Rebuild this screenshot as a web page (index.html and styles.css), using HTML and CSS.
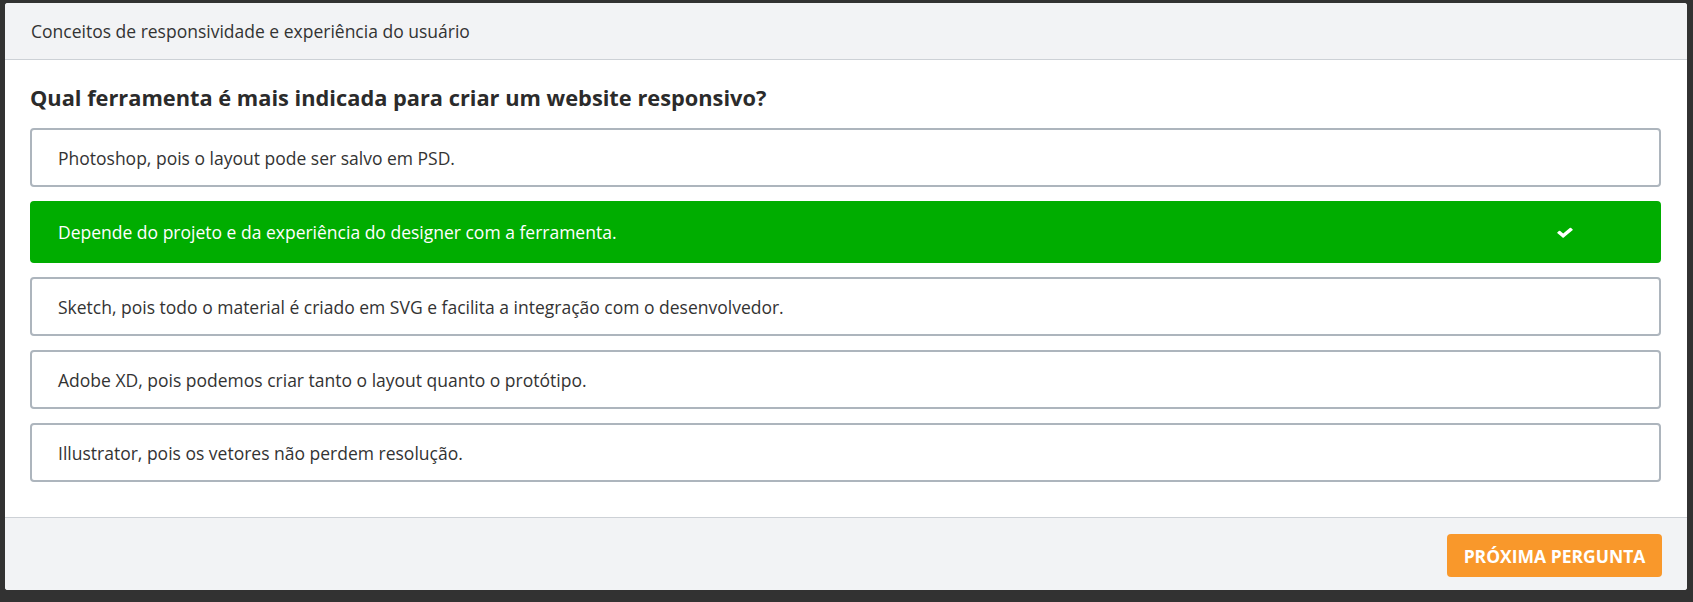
FILE: index.html
```html
<!DOCTYPE html>
<html lang="pt-BR">
<head>
<meta charset="utf-8">
<title>Quiz</title>
<link rel="stylesheet" href="styles.css">
</head>
<body>
<div class="card">
  <div class="card-header">Conceitos de responsividade e experiência do usuário</div>
  <div class="card-body">
    <h2 class="question">Qual ferramenta é mais indicada para criar um website responsivo?</h2>
    <ul class="options">
      <li class="option">Photoshop, pois o layout pode ser salvo em PSD.</li>
      <li class="option correct">
        <span>Depende do projeto e da experiência do designer com a ferramenta.</span>
        <svg class="check" viewBox="0 0 1792 1792" width="18" height="15" preserveAspectRatio="none"><path fill="#fff" d="M1671 566q0 40-28 68l-724 724-136 136q-28 28-68 28t-68-28l-136-136-362-362q-28-28-28-68t28-68l136-136q28-28 68-28t68 28l294 295 656-657q28-28 68-28t68 28l136 136q28 28 28 68z"/></svg>
      </li>
      <li class="option">Sketch, pois todo o material é criado em SVG e facilita a integração com o desenvolvedor.</li>
      <li class="option">Adobe XD, pois podemos criar tanto o layout quanto o protótipo.</li>
      <li class="option">Illustrator, pois os vetores não perdem resolução.</li>
    </ul>
  </div>
  <div class="card-footer">
    <button class="btn-next">PRÓXIMA PERGUNTA</button>
  </div>
</div>
</body>
</html>
```
FILE: styles.css
```css
html, body {
  margin: 0;
  padding: 0;
}
body {
  background: #323232;
  padding: 3px 6px 12px 5px;
  font-family: "Open Sans", "Noto Sans", sans-serif;
  color: #333;
}
.card {
  background: #fff;
  border-radius: 3px;
  overflow: hidden;
  height: 587px;
  display: flex;
  flex-direction: column;
}
.card-header {
  height: 56px;
  background: #f2f3f5;
  border-bottom: 1px solid #cdd1d6;
  padding-left: 26px;
  font-size: 17.5px;
  line-height: 56px;
  color: #333;
}
.card-body {
  flex: 1;
  padding: 23px 26px 0 25px;
}
.question {
  margin: 0 0 15px 0;
  font-size: 21.8px;
  font-weight: 700;
  line-height: 30px;
  color: #2b2b2b;
}
.options {
  list-style: none;
  margin: 0;
  padding: 0;
  display: flex;
  flex-direction: column;
  gap: 14px;
}
.option {
  height: 55px;
  border: 2px solid #adb5bd;
  border-radius: 4px;
  padding: 0 26px;
  display: flex;
  align-items: center;
  font-size: 17.5px;
  color: #333;
}
.option.correct {
  height: 58px;
  background: #00ad00;
  border-color: #00ad00;
  color: #fff;
  justify-content: space-between;
  padding-right: 85px;
}
.check {
  display: block;
}
.card-footer {
  height: 73px;
  background: #f2f3f5;
  border-top: 1px solid #cdd1d6;
  display: flex;
  justify-content: flex-end;
  align-items: flex-start;
  padding: 16px 25px 0 0;
  box-sizing: border-box;
}
.btn-next {
  width: 215px;
  height: 43px;
  background: #f9982b;
  border: none;
  border-radius: 4px;
  color: #fff;
  font-family: "Open Sans", "Noto Sans", sans-serif;
  font-size: 17.5px;
  font-weight: 700;
  padding: 0;
}
```
